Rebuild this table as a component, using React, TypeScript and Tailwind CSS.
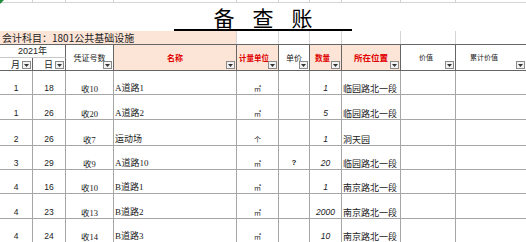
const COLS = "grid grid-cols-[33px_33px_48px_123px_42px_31px_32px_59px_55px_70px]"

const SANS = "font-['Liberation_Sans','Noto_Sans_CJK_SC',sans-serif]"
const SERIF = "font-['Liberation_Serif','Noto_Sans_CJK_SC',serif]"
const CJK = "font-['Noto_Sans_CJK_SC',sans-serif]"

type LedgerRow = {
  month: string
  day: string
  voucher: string
  name: string
  unit: string
  price?: string
  qty: string
  place: string
  height: string
}

const ROWS: LedgerRow[] = [
  { month: "1", day: "18", voucher: "收10", name: "A道路1", unit: "㎡", qty: "1", place: "临园路北一段", height: "h-[24px]" },
  { month: "1", day: "26", voucher: "收20", name: "A道路2", unit: "㎡", qty: "5", place: "临园路北一段", height: "h-[25px]" },
  { month: "2", day: "26", voucher: "收7", name: "运动场", unit: "个", qty: "1", place: "洞天园", height: "h-[26px]" },
  { month: "3", day: "29", voucher: "收9", name: "A道路10", unit: "㎡", price: "?", qty: "20", place: "临园路北一段", height: "h-[24px]" },
  { month: "4", day: "16", voucher: "收10", name: "B道路1", unit: "㎡", qty: "1", place: "南京路北一段", height: "h-[24px]" },
  { month: "4", day: "23", voucher: "收13", name: "B道路2", unit: "㎡", qty: "2000", place: "南京路北一段", height: "h-[25px]" },
  { month: "4", day: "24", voucher: "收14", name: "B道路3", unit: "㎡", qty: "10", place: "南京路北一段", height: "h-[24px]" },
]

// little excel filter button, sits in the bottom-right corner of a header cell
function FilterButton() {
  return (
    <span className="absolute right-[1px] bottom-[1px] flex h-[8px] w-[9px] items-center justify-center border border-[#8a8a8a] bg-[#f2f2f2]">
      <svg width="5" height="3" viewBox="0 0 5 3">
        <polygon points="0,0 5,0 2.5,3" fill="#333" />
      </svg>
    </span>
  )
}

function HeaderCell({
  label,
  accent = false,
  className = "",
}: {
  label: string
  accent?: boolean
  className?: string
}) {
  return (
    <div
      className={`relative row-span-2 flex items-center justify-center border-r border-[#666] leading-none ${CJK} ${
        accent ? "bg-[#fce4d6] font-bold text-[#e00000]" : "text-[#222]"
      } ${className}`}
    >
      {label}
      <FilterButton />
    </div>
  )
}

export default function App() {
  return (
    <div className="relative h-[242px] w-[526px] overflow-hidden bg-white text-[#1a1a1a]">
      <span className="absolute top-0 left-0 h-0 w-0 border-t-[4px] border-r-[4px] border-t-[#1e8c3a] border-r-transparent" />

      {/* row above the title, cut off */}
      <div className={`${COLS} h-[3px] border-b border-[#d4d4d4]`}>
        {Array.from({ length: 10 }).map((_, i) => (
          <div key={i} className={i < 9 ? "border-r border-[#d4d4d4]" : ""} />
        ))}
      </div>

      {/* title */}
      <div className="flex h-[28px] items-end justify-center">
        <div className={`flex w-[178px] justify-center gap-[18px] border-b-2 border-black pb-[1px] text-[21px] leading-none text-black ${CJK}`}>
          <span>备</span>
          <span>查</span>
          <span>账</span>
        </div>
      </div>

      {/* account line */}
      <div className={`${COLS} h-[13px]`}>
        <div className={`col-span-4 flex items-center border-r border-[#d4d4d4] bg-[#fce4d6] pl-[2px] text-[10px] leading-none text-[#222] ${CJK}`}>
          会计科目：1801公共基础设施
        </div>
        {Array.from({ length: 6 }).map((_, i) => (
          <div key={i} className={i < 5 ? "border-r border-[#d4d4d4]" : ""} />
        ))}
      </div>

      {/* header */}
      <div className={`${COLS} grid-rows-[13px_12px] border-y border-[#666]`}>
        <div className={`col-span-2 flex items-center justify-center border-r border-b border-r-[#666] border-b-[#c8c8c8] text-[9px] leading-none text-[#222] ${SANS}`}>
          2021年
        </div>
        <HeaderCell label="凭证号数" className="text-[8px]" />
        <HeaderCell label="名称" accent className="text-[8px]" />
        <HeaderCell label="计量单位" accent className="justify-start pl-[2px] text-[7.5px]" />
        <HeaderCell label="单价" className="text-[8px]" />
        <HeaderCell label="数量" accent className="pr-[6px] text-[7.5px]" />
        <HeaderCell label="所在位置" accent className="text-[8.5px]" />
        <HeaderCell label="价值" className="pr-[4px] text-[7px]" />
        <HeaderCell label="累计价值" className="border-r-0 pr-[14px] text-[7px]" />
        <div className={`relative flex items-center justify-end border-r border-[#666] pr-[12px] text-[9px] leading-none text-[#222] ${CJK}`}>
          月
          <FilterButton />
        </div>
        <div className={`relative flex items-center justify-end border-r border-[#666] pr-[12px] text-[9px] leading-none text-[#222] ${CJK}`}>
          日
          <FilterButton />
        </div>
      </div>

      {/* ledger rows */}
      {ROWS.map((row, i) => (
        <div key={i} className={`${COLS} border-b border-[#a6a6a6] ${row.height}`}>
          <div className={`flex items-end justify-center border-r border-[#a6a6a6] pb-[2px] text-[8.5px] leading-none ${SANS}`}>
            {row.month}
          </div>
          <div className={`flex items-end justify-center border-r border-[#a6a6a6] pb-[2px] text-[8.5px] leading-none ${SANS}`}>
            {row.day}
          </div>
          <div className={`flex items-end justify-center border-r border-[#a6a6a6] pb-[1px] text-[8.5px] leading-none ${SERIF}`}>
            {row.voucher}
          </div>
          <div className={`flex items-end border-r border-[#a6a6a6] pb-[1px] pl-[1px] text-[9px] leading-none ${SERIF}`}>
            {row.name}
          </div>
          <div className={`flex items-end justify-center border-r border-[#a6a6a6] pb-[2px] text-[7px] leading-none ${CJK}`}>
            {row.unit}
          </div>
          <div className={`flex items-end justify-center border-r border-[#a6a6a6] pb-[2px] text-[8px] leading-none font-bold ${SANS}`}>
            {row.price ?? ""}
          </div>
          <div className={`flex items-end justify-center border-r border-[#a6a6a6] pb-[2px] text-[8.5px] leading-none italic ${SANS}`}>
            {row.qty}
          </div>
          <div className={`flex items-end border-r border-[#a6a6a6] pb-[1px] pl-[1px] text-[9px] leading-none ${CJK}`}>
            {row.place}
          </div>
          <div className="border-r border-[#a6a6a6]" />
          <div />
        </div>
      ))}
    </div>
  )
}
